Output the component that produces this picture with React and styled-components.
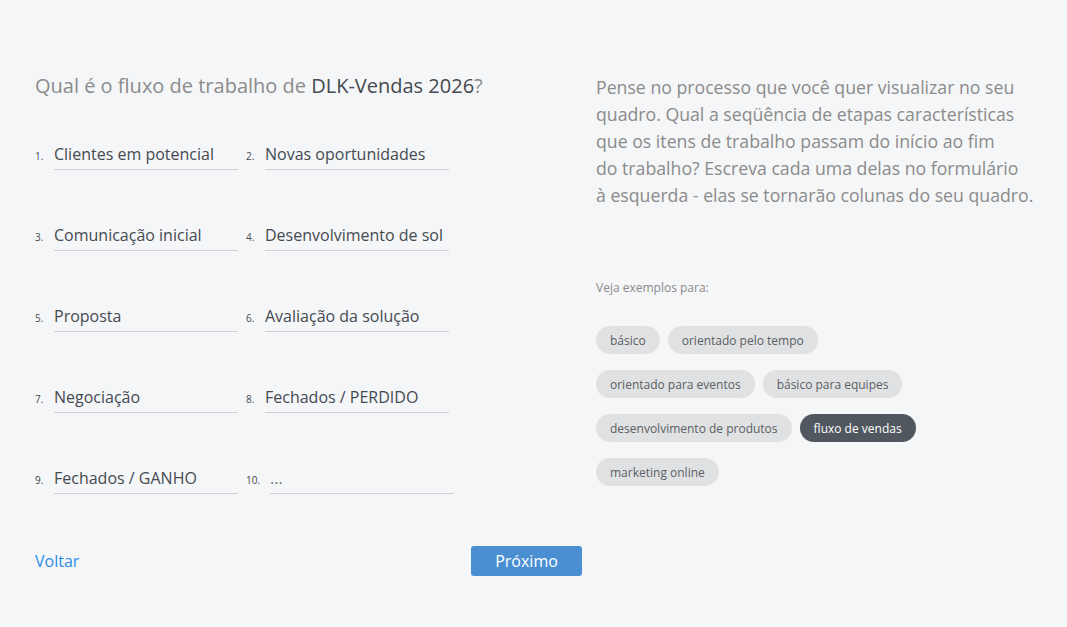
import React from 'react';
import styled, { createGlobalStyle } from 'styled-components';

const GlobalStyle = createGlobalStyle`
  html, body {
    margin: 0;
    padding: 0;
    background: #f5f6f8;
    font-family: "Open Sans", "Liberation Sans", sans-serif;
  }
`;

const Page = styled.div`
  display: flex;
  gap: 14px;
  padding: 72px 0 0 35px;
  min-height: 627px;
  box-sizing: border-box;
`;

const FormColumn = styled.div`
  width: 547px;
  flex-shrink: 0;
  display: flex;
  flex-direction: column;
`;

const Title = styled.h2`
  margin: 0;
  font-size: 20px;
  font-weight: 400;
  line-height: 28px;
  color: #8b8b8b;
`;

const Board = styled.span`
  color: #454a50;
`;

const Steps = styled.div`
  display: grid;
  grid-template-columns: auto auto;
  justify-content: start;
  column-gap: 8px;
  row-gap: 50px;
  margin-top: 39px;
`;

const Step = styled.label`
  display: flex;
  align-items: baseline;
`;

const Num = styled.span`
  font-size: 10px;
  color: #454a50;
  margin-right: 10px;
  min-width: 9px;
`;

const Field = styled.input`
  width: 184px;
  height: 31px;
  box-sizing: border-box;
  padding: 0 6px 1px 0;
  border: none;
  border-bottom: 1px solid #cfd1d4;
  background: transparent;
  font-family: inherit;
  font-size: 16px;
  color: #454a50;
  outline: none;

  &::placeholder {
    color: #777;
  }
`;

const Actions = styled.div`
  display: flex;
  justify-content: space-between;
  align-items: center;
  margin-top: 52px;
`;

const BackLink = styled.a`
  font-size: 16px;
  color: #2b8de8;
  text-decoration: none;
  cursor: pointer;
`;

const NextButton = styled.button`
  width: 111px;
  height: 30px;
  border: none;
  border-radius: 3px;
  background: #4b8fd3;
  color: #fff;
  font-family: inherit;
  font-size: 16px;
  cursor: pointer;
`;

const HelpColumn = styled.div`
  flex: 1;
  display: flex;
  flex-direction: column;
`;

const Help = styled.p`
  margin: 2px 0 0;
  font-size: 17.7px;
  line-height: 27px;
  color: #8b8b8b;
  white-space: nowrap;
`;

const ExamplesLabel = styled.div`
  margin-top: 70px;
  font-size: 12px;
  color: #8b8b8b;
`;

const Tags = styled.div`
  display: flex;
  flex-wrap: wrap;
  column-gap: 8px;
  row-gap: 16px;
  margin-top: 30px;
  width: 330px;
`;

const Tag = styled.button`
  height: 28px;
  padding: 0 14px;
  border: none;
  border-radius: 14px;
  background: ${({ $active }) => ($active ? '#51575e' : '#e0e1e3')};
  color: ${({ $active }) => ($active ? '#ffffff' : '#5a5f64')};
  font-family: inherit;
  font-size: 12px;
  cursor: pointer;
`;

const steps = [
  'Clientes em potencial',
  'Novas oportunidades',
  'Comunicação inicial',
  'Desenvolvimento de solução',
  'Proposta',
  'Avaliação da solução',
  'Negociação',
  'Fechados / PERDIDO',
  'Fechados / GANHO',
  '',
];

const tags = [
  ['básico'],
  ['orientado pelo tempo'],
  ['orientado para eventos'],
  ['básico para equipes'],
  ['desenvolvimento de produtos'],
  ['fluxo de vendas', true],
  ['marketing online'],
];

const App = () => (
  <>
    <GlobalStyle />
    <Page>
      <FormColumn>
        <Title>
          Qual é o fluxo de trabalho de <Board>DLK-Vendas 2026</Board>?
        </Title>

        <Steps>
          {steps.map((value, i) => (
            <Step key={i}>
              <Num>{i + 1}.</Num>
              <Field defaultValue={value} placeholder={value ? '' : '...'} />
            </Step>
          ))}
        </Steps>

        <Actions>
          <BackLink>Voltar</BackLink>
          <NextButton>Próximo</NextButton>
        </Actions>
      </FormColumn>

      <HelpColumn>
        <Help>
          Pense no processo que você quer visualizar no seu
          <br />
          quadro. Qual a seqüência de etapas características
          <br />
          que os itens de trabalho passam do início ao fim
          <br />
          do trabalho? Escreva cada uma delas no formulário
          <br />
          à esquerda - elas se tornarão colunas do seu quadro.
        </Help>

        <ExamplesLabel>Veja exemplos para:</ExamplesLabel>

        <Tags>
          {tags.map(([label, active]) => (
            <Tag key={label} $active={active}>
              {label}
            </Tag>
          ))}
        </Tags>
      </HelpColumn>
    </Page>
  </>
);

export default App;
